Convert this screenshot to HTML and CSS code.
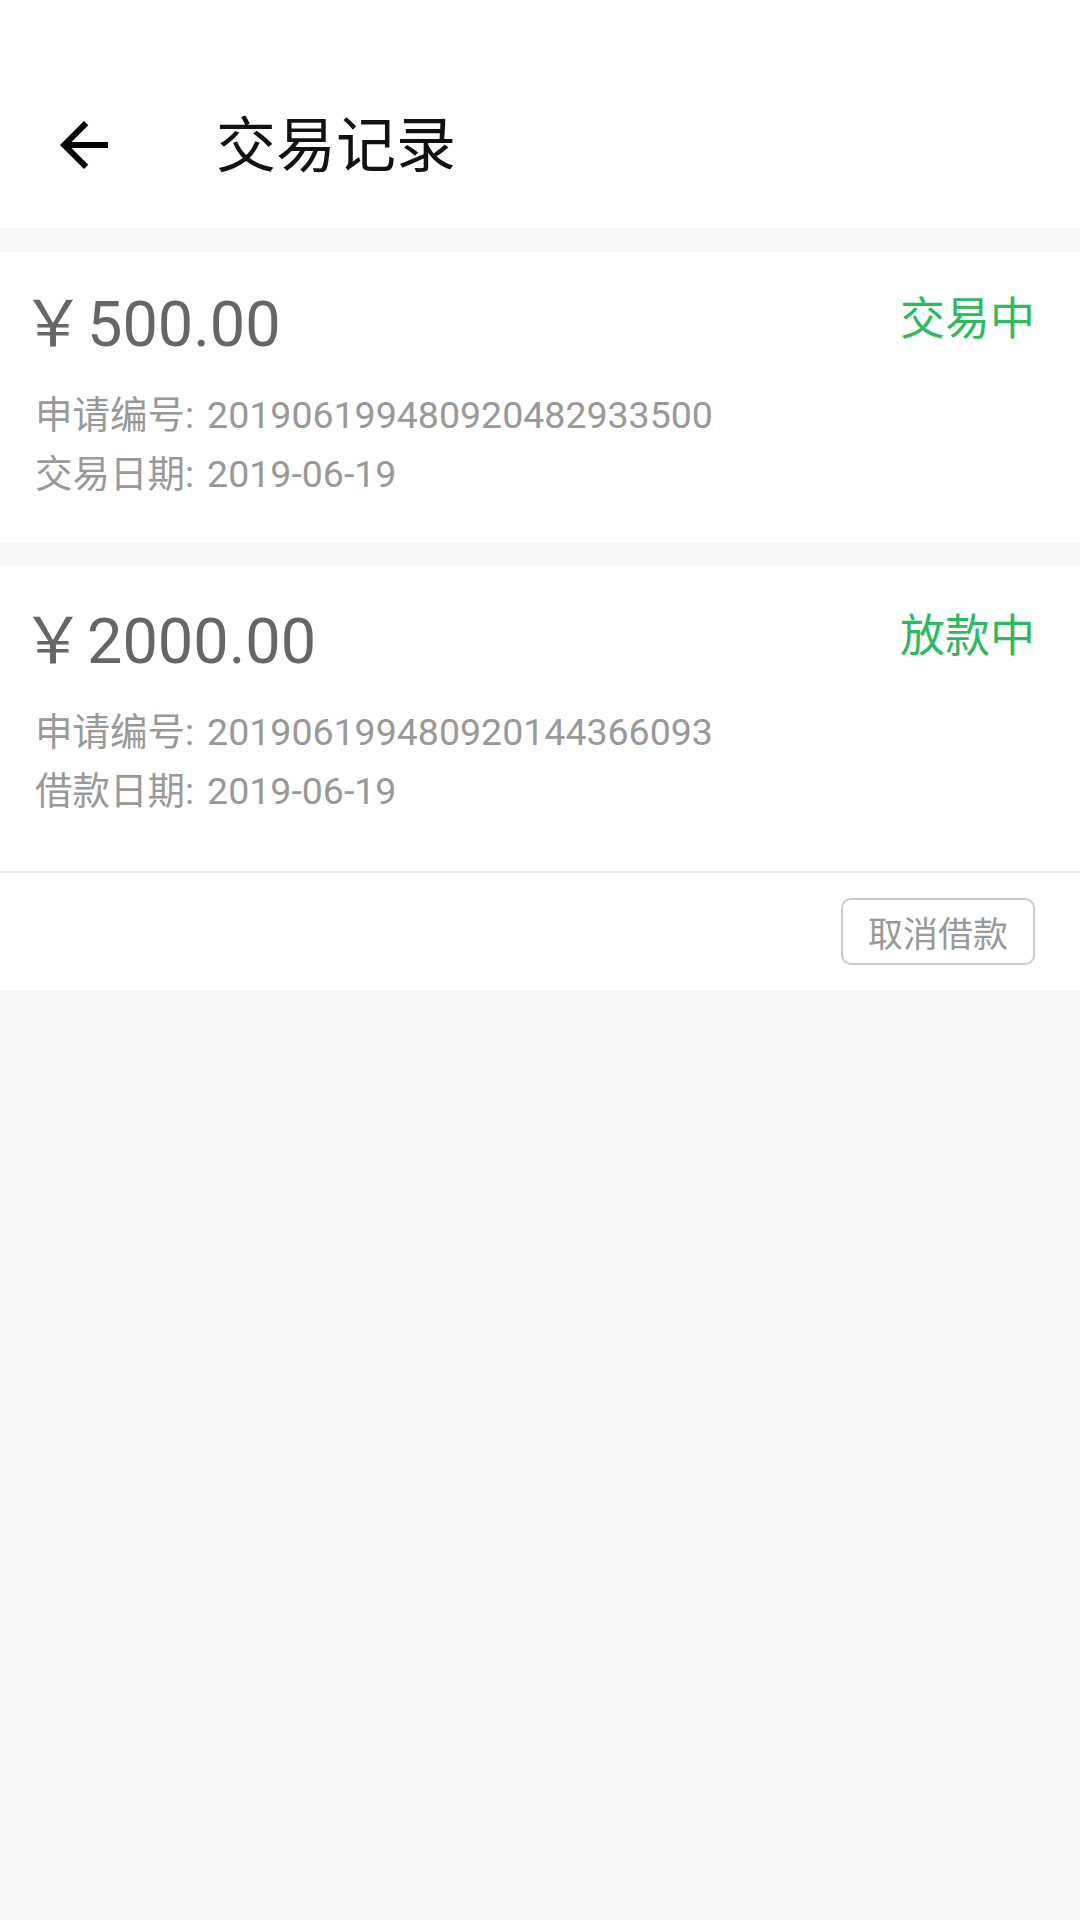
FILE: index.html
```html
<!DOCTYPE html>
<html lang="zh-CN">
<head>
    <meta charset="UTF-8">
    <meta name="viewport" content="width=device-width, initial-scale=1.0">
    <title>交易记录</title>
    <link rel="stylesheet" href="styles.css">
</head>
<body>

    <div class="header">
        <div class="toolbar">
            <button class="back-btn">
                <svg viewBox="0 0 24 24" width="72" height="72">
                    <path d="M20 11H7.83l5.59-5.59L12 4l-8 8 8 8 1.41-1.41L7.83 13H20v-2z" fill="#000"/>
                </svg>
            </button>
            <h1>交易记录</h1>
        </div>
    </div>

    <div class="list">
        <div class="record">
            <div class="record-top">
                <span class="amount"><span class="yen">￥</span>500.00</span>
                <span class="status">交易中</span>
            </div>
            <p class="info"><span class="label">申请编号:</span>201906199480920482933500</p>
            <p class="info"><span class="label">交易日期:</span>2019-06-19</p>
        </div>

        <div class="record record-loan">
            <div class="record-top">
                <span class="amount"><span class="yen">￥</span>2000.00</span>
                <span class="status">放款中</span>
            </div>
            <p class="info"><span class="label">申请编号:</span>201906199480920144366093</p>
            <p class="info"><span class="label">借款日期:</span>2019-06-19</p>
        </div>
        <div class="record-actions">
            <button class="cancel-btn">取消借款</button>
        </div>
    </div>

</body>
</html>
```

FILE: styles.css
```css
body {
    margin: 0;
    padding: 0;
    font-family: Roboto, "Noto Sans CJK SC", sans-serif;
    background-color: #f7f7f7;
    width: 1080px;
    min-height: 1920px;
}

.header {
    background-color: #fff;
    height: 228px;
    padding-top: 73px;
    box-sizing: border-box;
}

.toolbar {
    display: flex;
    align-items: center;
    height: 144px;
}

.back-btn {
    background: transparent;
    border: none;
    padding: 0;
    margin-left: 48px;
    width: 72px;
    height: 72px;
    display: flex;
}

.toolbar h1 {
    margin: 0 0 0 96px;
    padding-bottom: 9px;
    font-family: "Noto Sans CJK SC", sans-serif;
    font-size: 60px;
    font-weight: normal;
    color: #111;
}

.list {
    margin-top: 24px;
}

.record {
    background-color: #fff;
    padding: 26px 45px 39px 35px;
    margin-bottom: 22px;
}

.record-loan {
    margin-bottom: 0;
    padding-top: 30px;
    padding-bottom: 50px;
}

.record-top {
    display: flex;
    justify-content: space-between;
    align-items: flex-start;
    margin-bottom: 21px;
}

.amount {
    font-size: 63px;
    line-height: 80px;
    color: #666;
}

.yen {
    font-family: "Noto Sans CJK SC", sans-serif;
    font-size: 64px;
    margin-left: -14px;
    margin-right: 2px;
}

.status {
    font-family: "Noto Sans CJK SC", sans-serif;
    font-size: 45px;
    line-height: 76px;
    color: #2dbb60;
}

.info {
    margin: 0;
    font-size: 37.5px;
    line-height: 59px;
    color: #999;
}

.info .label {
    margin-right: 13px;
}

.record-actions {
    background-color: #fff;
    border-top: 2px solid #ececec;
    display: flex;
    justify-content: flex-end;
    padding: 25px 45px 25px 0;
}

.cancel-btn {
    width: 194px;
    height: 67px;
    background: #fff;
    border: 2px solid #ccc;
    border-radius: 10px;
    font-family: "Noto Sans CJK SC", sans-serif;
    font-size: 35px;
    color: #999;
    padding: 0;
}
```
